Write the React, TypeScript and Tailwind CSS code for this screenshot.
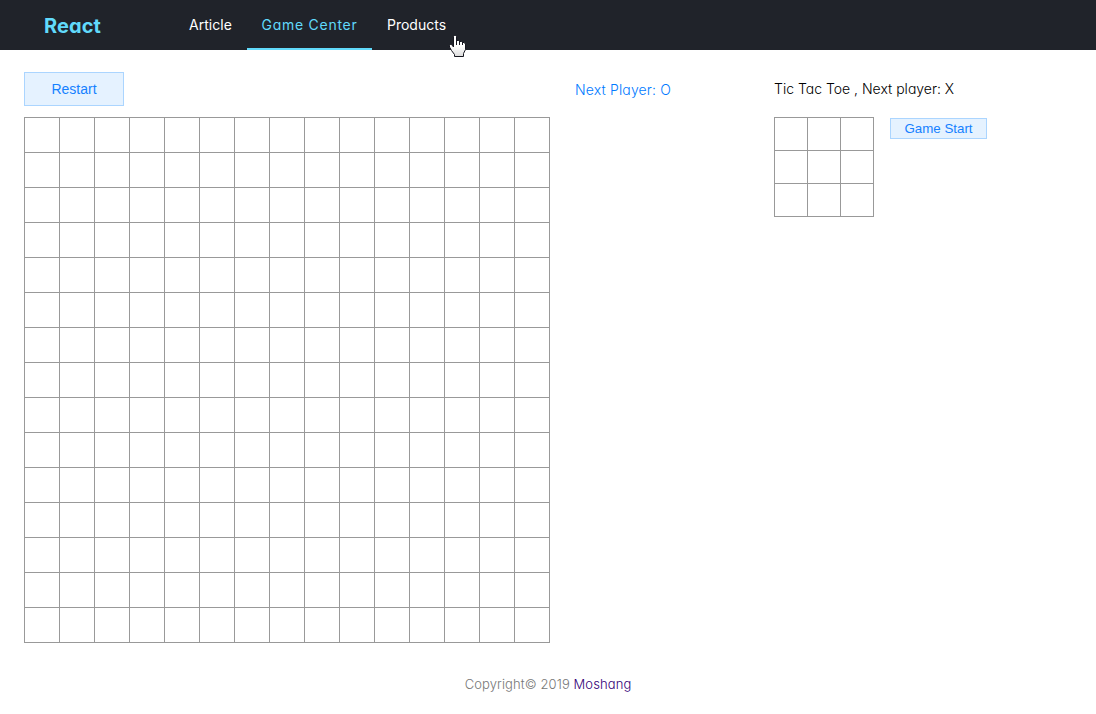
import { useState } from "react";

const navItems = [
  { label: "Article", width: "w-[73px]", tracking: "tracking-[0.05px]" },
  { label: "Game Center", width: "w-[125px]", tracking: "tracking-[0.73px]" },
  { label: "Products", width: "w-[89px]", tracking: "tracking-normal" },
];

const gothic = "font-['Inter',sans-serif] [font-feature-settings:'cv11']";

function Board({ size, columns, cell }: { size: number; columns: string; cell: string }) {
  return (
    <div className={`grid w-max border-t border-l border-[#999] ${columns}`}>
      {Array.from({ length: size * size }, (_, i) => (
        <button key={i} type="button" aria-label={`Square ${i + 1}`} className={`block border-r border-b border-[#999] bg-white ${cell}`} />
      ))}
    </div>
  );
}

function HandCursor() {
  return (
    <svg className="pointer-events-none absolute top-[35px] left-[449px]" width="18" height="23" viewBox="0 0 18 23">
      <defs>
        <linearGradient id="hand" x1="0" y1="0" x2="0" y2="1">
          <stop offset="0.5" stopColor="#fff" />
          <stop offset="1" stopColor="#dcdcdc" />
        </linearGradient>
      </defs>
      <path
        d="M4.5 1.5L5.5 .5H6.5L7.5 1.5V5.5H9.5L10.5 6.5H12.5L13.5 7.5H15L16.5 9V14.5L14.5 18.5V21.5H5.5V19.5L2.5 15.5L.5 12V10.5L1.5 9.5H2.5L4.5 12Z"
        fill="url(#hand)"
        stroke="#15161f"
        strokeWidth="1"
      />
      <path d="M7.5 5V10M10.5 6V10M13.5 7V10" fill="none" stroke="#15161f" strokeWidth="1" />
    </svg>
  );
}

export default function App() {
  const [active, setActive] = useState("Game Center");

  return (
    <div className={`relative flex h-[714px] flex-col overflow-hidden bg-white text-sm font-light text-black ${gothic}`}>
      <header className="flex h-[50px] shrink-0 bg-[#20232a] pl-[44px]">
        <div className="flex h-[51px] w-[130px] items-center text-xl font-bold tracking-[0.1px] text-[#61dafb]">React</div>
        <nav className="flex">
          {navItems.map(({ label, width, tracking }) => (
            <button
              key={label}
              type="button"
              onClick={() => setActive(label)}
              className={`flex h-[50px] items-center justify-center border-b-2 pt-0.5 font-normal whitespace-nowrap ${width} ${tracking} ${
                active === label ? "border-[#61dafb] text-[#61dafb]" : "border-transparent text-white"
              }`}
            >
              {label}
            </button>
          ))}
        </nav>
      </header>

      <main className="flex px-6 pt-[22px]">
        <section className="w-[551px]">
          <button type="button" className="mb-[11px] block h-[34px] w-[100px] border border-[#abd5ff] bg-[#e5f2ff] font-['Liberation_Sans',sans-serif] text-sm font-normal text-[#1581ff]">
            Restart
          </button>
          <Board size={15} columns="grid-cols-[repeat(15,35px)]" cell="h-[35px]" />
        </section>
        <p className="w-[199px] pt-2 tracking-[0.15px] text-[#007aff]">Next Player: O</p>
        <section>
          <p className="mb-[18px] pt-[7px]">Tic Tac Toe , Next player: X</p>
          <div className="flex items-start gap-4">
            <Board size={3} columns="grid-cols-[repeat(3,33px)]" cell="h-[33px]" />
            <button type="button" className="mt-px h-[21px] w-[97px] border border-[#abd5ff] bg-[#e5f2ff] font-['Liberation_Sans',sans-serif] text-[13.333px] leading-none font-normal text-[#1581ff]">
              Game Start
            </button>
          </div>
        </section>
      </main>

      <footer className="mt-[31px] text-center text-[13px] leading-5 tracking-[0.1px] text-[#777]">
        Copyright© 2019 <a className="text-[#330077]" href="#">Moshang</a>
      </footer>
      <HandCursor />
    </div>
  );
}
